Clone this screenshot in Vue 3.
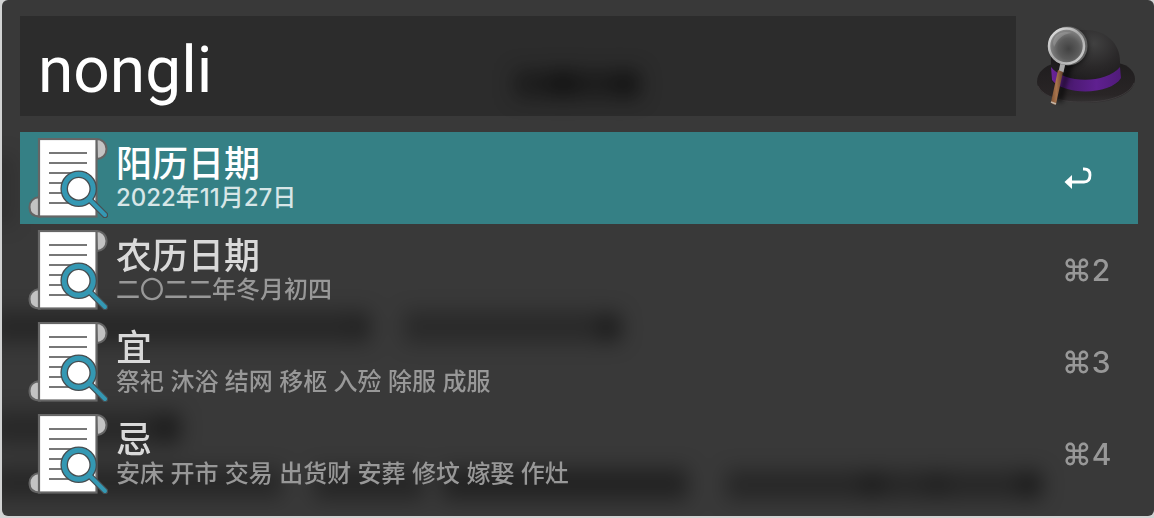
<script setup>
import { ref } from 'vue'

const query = ref('nongli')
const selected = ref(0)
const results = [
  { title: '阳历日期', subtitle: '2022年11月27日' },
  { title: '农历日期', subtitle: '二〇二二年冬月初四' },
  { title: '宜', subtitle: '祭祀 沐浴 结网 移柩 入殓 除服 成服' },
  { title: '忌', subtitle: '安床 开市 交易 出货财 安葬 修坟 嫁娶 作灶' },
]
</script>

<template>
  <main class="launcher">
    <svg class="backdrop" aria-hidden="true">
      <defs>
        <filter id="soft" x="-20%" y="-100%" width="140%" height="300%">
          <feGaussianBlur stdDeviation="10" />
        </filter>
      </defs>
      <g filter="url(#soft)">
        <rect x="512" y="70" width="126" height="28" opacity=".36" />
        <circle cx="561" cy="83" r="14" opacity=".3" />
        <circle cx="625" cy="84" r="13" opacity=".3" />
        <rect x="-10" y="155" width="22" height="70" opacity=".15" />
        <rect x="-10" y="311" width="378" height="32" opacity=".3" />
        <rect x="402" y="311" width="216" height="32" opacity=".26" />
        <circle cx="608" cy="328" r="13" opacity=".3" />
        <circle cx="358" cy="326" r="12" opacity=".12" />
        <rect x="-10" y="411" width="188" height="34" opacity=".28" />
        <circle cx="166" cy="428" r="14" opacity=".3" />
        <rect x="-10" y="468" width="290" height="30" opacity=".3" />
        <rect x="312" y="468" width="110" height="32" opacity=".32" />
        <rect x="440" y="468" width="246" height="32" opacity=".38" />
        <rect x="724" y="470" width="316" height="30" opacity=".3" />
        <circle cx="870" cy="484" r="13" opacity=".22" />
        <circle cx="935" cy="484" r="13" opacity=".15" />
        <circle cx="1028" cy="484" r="13" opacity=".28" />
      </g>
    </svg>

    <header class="bar">
      <input v-model="query" class="search" type="text" aria-label="Search" spellcheck="false" />
      <svg class="hat" viewBox="0 0 102 90" aria-hidden="true">
        <defs>
          <radialGradient id="crown" cx=".62" cy=".22" r=".65">
            <stop offset="0" stop-color="#414141" />
            <stop offset=".6" stop-color="#2a2829" />
            <stop offset="1" stop-color="#1f1d1e" />
          </radialGradient>
          <linearGradient id="brim" x1="0" y1="0" x2="0" y2="1">
            <stop offset="0" stop-color="#1f1d1e" />
            <stop offset=".8" stop-color="#292526" />
            <stop offset="1" stop-color="#343233" />
          </linearGradient>
          <linearGradient id="band" x1="0" y1="0" x2="1" y2="0">
            <stop offset="0" stop-color="#6a2399" />
            <stop offset=".3" stop-color="#4c1a73" />
            <stop offset=".65" stop-color="#5f2090" />
            <stop offset="1" stop-color="#501b79" />
          </linearGradient>
          <radialGradient id="glass" cx=".56" cy=".58" r=".55">
            <stop offset="0" stop-color="#424242" />
            <stop offset=".55" stop-color="#5b5b5b" />
            <stop offset="1" stop-color="#888" />
          </radialGradient>
          <linearGradient id="rim" x1="0" y1="0" x2="1" y2="1">
            <stop offset="0" stop-color="#e8e8e8" />
            <stop offset=".5" stop-color="#a6a6a6" />
            <stop offset="1" stop-color="#d2d2d2" />
          </linearGradient>
          <linearGradient id="wood" x1="0" y1="0" x2="1" y2="0">
            <stop offset="0" stop-color="#7e5132" />
            <stop offset=".45" stop-color="#a8744d" />
            <stop offset="1" stop-color="#63402a" />
          </linearGradient>
          <filter id="shade" x="-50%" y="-50%" width="200%" height="200%">
            <feGaussianBlur stdDeviation="2.5" />
          </filter>
        </defs>
        <path d="M1 61C1 51 10 43 22 42H82C93 44 99 51 99 58C99 72 78 82 50 82C21 82 1 73 1 61Z" fill="url(#brim)" />
        <path d="M2 65C7 76 27 82 50 81C75 81 94 73 98 62" fill="none" stroke="#444243" stroke-width="1" opacity=".7" />
        <path d="M15 60V37C15 18 29 9 48 9C70 9 84 22 84 41V59C74 73 28 74 15 60Z" fill="url(#crown)" />
        <path d="M15 46C28 63 70 63 84 46L85 57C75 74 28 75 16 59Z" fill="url(#band)" />
        <path d="M36 36L32 47L23 81" fill="none" stroke="#000" stroke-width="7" opacity=".55" filter="url(#shade)" />
        <circle cx="34" cy="27" r="18" opacity=".5" filter="url(#shade)" />
        <path d="M27 42L25 51" stroke="#aaa" stroke-width="5" />
        <path d="M22 49L27 51L20 83C18 84 16 83 15 81Z" fill="url(#wood)" />
        <path d="M15 81L20 83" stroke="#c3b5a7" stroke-width="1.5" />
        <circle cx="32" cy="25" r="18" fill="none" stroke="#646464" stroke-width="3" />
        <circle cx="30.5" cy="25" r="17.5" fill="url(#glass)" stroke="url(#rim)" stroke-width="2.5" />
        <path d="M17 22C18 12 28 9 36 12C26 13 22 18 18 26Z" fill="#ccc" opacity=".25" />
      </svg>
    </header>

    <ul class="results">
      <li v-for="(item, i) in results" :key="item.title">
        <button type="button" class="row" :class="{ active: i === selected }" @click="selected = i">
          <svg class="scroll" viewBox="0 0 80 80" aria-hidden="true">
            <g fill="#c3c3c3" stroke="#646464" stroke-width="2">
              <path d="M68 1C74 1 78.500 5 78.500 11C78.500 17 74 21 69 21Z" />
              <path d="M11 59C5 60 1.500 64 1.500 69C1.500 75 5 78.500 12 78.500Z" />
            </g>
            <rect x="11" y="1" width="57.500" height="77.500" fill="#fff" stroke="#666" stroke-width="2.200" />
            <path d="M21 15H59M21 25H59M21 35H59M21 45H59M21 55H59M21 65H59" stroke="#777" stroke-width="2" />
            <path d="M61 61L77 77" stroke="#474d50" stroke-width="6.500" stroke-linecap="round" />
            <circle cx="50.700" cy="50.700" r="14.500" fill="#fff" stroke="#474d50" stroke-width="7.600" />
            <circle cx="50.700" cy="50.700" r="14.500" fill="none" stroke="#3498b3" stroke-width="5" />
            <path d="M61 61L77 77" stroke="#3498b3" stroke-width="4" stroke-linecap="round" />
          </svg>
          <span class="text">
            <span class="title">{{ item.title }}</span>
            <span class="subtitle">{{ item.subtitle }}</span>
          </span>
          <span class="key">
            <svg v-if="i === 0" class="enter" viewBox="0 0 30 22" role="img" aria-label="Return">
              <path d="M21 2H22C26 2 28 4.500 28 8C28 12.500 25.800 15 22 15H8" fill="none" stroke="#fff" stroke-width="2.800" />
              <path d="M2.500 15L10 8V22Z" fill="#fff" />
            </svg>
            <template v-else>⌘{{ i + 1 }}</template>
          </span>
        </button>
      </li>
    </ul>
  </main>
</template>

<style>
body {
  background: #d2d3d3;
}
</style>

<style scoped>
.launcher {
  position: relative;
  overflow: hidden;
  margin: 0 0 2px 2px;
  padding: 16px 16px 16px 18px;
  border-radius: 6px;
  background: #393939;
  font-family: Inter, "Noto Sans CJK SC", sans-serif;
}
.backdrop {
  position: absolute;
  inset: 0;
  width: 100%;
  height: 100%;
}
.bar {
  position: relative;
  display: flex;
  align-items: center;
  gap: 20px;
  margin-bottom: 16px;
}
.search {
  flex: 1;
  min-width: 0;
  height: 100px;
  box-sizing: border-box;
  padding: 8px 18px 0;
  border: 0;
  outline: 0;
  background: rgba(0, 0, 0, 0.22);
  color: #fff;
  font: 400 64px Roboto, "Noto Sans CJK SC", sans-serif;
}
.hat {
  flex: none;
  width: 102px;
  height: 90px;
}
.results {
  position: relative;
  margin: 0;
  padding: 0;
  list-style: none;
}
.row {
  display: flex;
  align-items: center;
  width: 100%;
  height: 92px;
  padding: 0 28px 0 8px;
  border: 0;
  background: none;
  color: #989898;
  font: inherit;
  text-align: left;
}
.scroll {
  flex: none;
  width: 80px;
  height: 80px;
  margin-right: 8px;
}
.text {
  display: flex;
  flex: 1;
  flex-direction: column;
  min-width: 0;
  white-space: nowrap;
}
.title {
  color: #d9d9d9;
  font-size: 36px;
  font-weight: 500;
  line-height: 40px;
}
.subtitle {
  font-size: 24px;
  font-weight: 500;
  line-height: 28px;
}
.key {
  display: flex;
  width: 48px;
  font-size: 30px;
  font-weight: 500;
  line-height: 40px;
}
.enter {
  width: 30px;
  height: 22px;
}
.active {
  background: #358085;
  color: #d7e6e7;
}
.active .title {
  color: #fff;
}
</style>
